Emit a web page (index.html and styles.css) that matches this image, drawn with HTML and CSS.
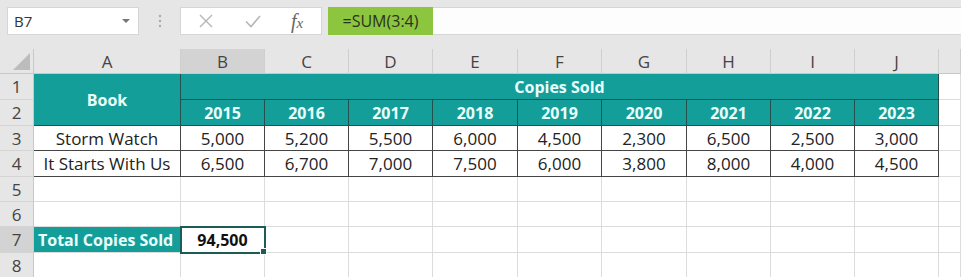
FILE: index.html
```html
<!DOCTYPE html>
<html lang="en">
<head>
    <meta charset="UTF-8" />
    <title>Copies Sold</title>
    <link rel="stylesheet" href="styles.css">
</head>
<body>
    <div class="toolbar">
        <div class="namebox">
            <span>B7</span>
            <svg class="caret" width="8" height="5" viewBox="0 0 8 5"><path d="M0 0h8L4 4z" fill="#777"/></svg>
        </div>
        <div class="grip">
            <svg width="4" height="14" viewBox="0 0 4 14"><circle cx="2" cy="2" r="1.2" fill="#aaa"/><circle cx="2" cy="7" r="1.2" fill="#aaa"/><circle cx="2" cy="12" r="1.2" fill="#aaa"/></svg>
        </div>
        <div class="fx-buttons">
            <svg class="btn-cancel" width="14" height="14" viewBox="0 0 14 14"><path d="M1 1l12 12M13 1L1 13" stroke="#b5b5b5" stroke-width="1.4" fill="none"/></svg>
            <svg class="btn-enter" width="16" height="14" viewBox="0 0 16 14"><path d="M1 7.5l5 5L15 2" stroke="#b5b5b5" stroke-width="1.6" fill="none"/></svg>
            <span class="fx">f<i>x</i></span>
        </div>
        <div class="formula">
            <span class="formula-text">=SUM(3:4)</span>
        </div>
    </div>

    <div class="sheet">
        <!-- column headers -->
        <div class="corner"><span class="tri"></span></div>
        <div class="colhead">A</div>
        <div class="colhead active">B</div>
        <div class="colhead">C</div>
        <div class="colhead">D</div>
        <div class="colhead">E</div>
        <div class="colhead">F</div>
        <div class="colhead">G</div>
        <div class="colhead">H</div>
        <div class="colhead">I</div>
        <div class="colhead">J</div>
        <div class="colhead"></div>

        <!-- row 1 -->
        <div class="rowhead">1</div>
        <div class="cell teal book">Book</div>
        <div class="cell teal span-title">Copies Sold</div>
        <div class="cell"></div>

        <!-- row 2 -->
        <div class="rowhead">2</div>
        <div class="cell teal">2015</div>
        <div class="cell teal">2016</div>
        <div class="cell teal">2017</div>
        <div class="cell teal">2018</div>
        <div class="cell teal">2019</div>
        <div class="cell teal">2020</div>
        <div class="cell teal">2021</div>
        <div class="cell teal">2022</div>
        <div class="cell teal">2023</div>
        <div class="cell"></div>

        <!-- row 3 -->
        <div class="rowhead">3</div>
        <div class="cell data">Storm Watch</div>
        <div class="cell data">5,000</div>
        <div class="cell data">5,200</div>
        <div class="cell data">5,500</div>
        <div class="cell data">6,000</div>
        <div class="cell data">4,500</div>
        <div class="cell data">2,300</div>
        <div class="cell data">6,500</div>
        <div class="cell data">2,500</div>
        <div class="cell data">3,000</div>
        <div class="cell"></div>

        <!-- row 4 -->
        <div class="rowhead">4</div>
        <div class="cell data">It Starts With Us</div>
        <div class="cell data">6,500</div>
        <div class="cell data">6,700</div>
        <div class="cell data">7,000</div>
        <div class="cell data">7,500</div>
        <div class="cell data">6,000</div>
        <div class="cell data">3,800</div>
        <div class="cell data">8,000</div>
        <div class="cell data">4,000</div>
        <div class="cell data">4,500</div>
        <div class="cell"></div>

        <!-- rows 5-6 -->
        <div class="rowhead">5</div>
        <div class="cell"></div><div class="cell"></div><div class="cell"></div><div class="cell"></div>
        <div class="cell"></div><div class="cell"></div><div class="cell"></div><div class="cell"></div>
        <div class="cell"></div><div class="cell"></div><div class="cell"></div>

        <div class="rowhead">6</div>
        <div class="cell"></div><div class="cell"></div><div class="cell"></div><div class="cell"></div>
        <div class="cell"></div><div class="cell"></div><div class="cell"></div><div class="cell"></div>
        <div class="cell"></div><div class="cell"></div><div class="cell"></div>

        <!-- row 7: total -->
        <div class="rowhead active">7</div>
        <div class="cell teal total-label">Total Copies Sold</div>
        <div class="cell selected">94,500</div>
        <div class="cell"></div><div class="cell"></div><div class="cell"></div><div class="cell"></div>
        <div class="cell"></div><div class="cell"></div><div class="cell"></div><div class="cell"></div>
        <div class="cell"></div>

        <div class="rowhead">8</div>
        <div class="cell"></div><div class="cell"></div><div class="cell"></div><div class="cell"></div>
        <div class="cell"></div><div class="cell"></div><div class="cell"></div><div class="cell"></div>
        <div class="cell"></div><div class="cell"></div><div class="cell"></div>
    </div>
</body>
</html>
```

FILE: styles.css
```css
body {
    margin: 0;
    font-family: 'Open Sans', sans-serif;
    background-color: #e6e6e6;
    overflow: hidden;
}
.toolbar {
    display: flex;
    align-items: center;
    height: 49px;
    padding: 0 0 0 7px;
    box-sizing: border-box;
    background-color: #e6e6e6;
}
.namebox {
    width: 132px;
    height: 28px;
    box-sizing: border-box;
    background-color: #fff;
    border: 1px solid #d6d6d6;
    display: flex;
    align-items: center;
    justify-content: space-between;
    padding: 0 8px 0 6px;
    font-size: 15px;
    color: #333;
    margin-top: -7px;
}
.grip {
    width: 41px;
    display: flex;
    justify-content: center;
    margin-top: -7px;
}
.fx-buttons {
    width: 142px;
    height: 28px;
    box-sizing: border-box;
    background-color: #fff;
    border: 1px solid #d6d6d6;
    display: flex;
    align-items: center;
    padding-left: 18px;
    margin-top: -7px;
}
.btn-enter {
    margin-left: 32px;
}
.fx {
    margin-left: 30px;
    font-family: 'Liberation Serif', serif;
    font-style: italic;
    font-size: 20px;
    color: #666;
    line-height: 1;
}
.fx i {
    font-size: 15px;
}
.formula {
    flex: 1;
    height: 28px;
    box-sizing: border-box;
    margin-left: 6px;
    background-color: #fdfdfd;
    border-top: 1px solid #d6d6d6;
    border-bottom: 1px solid #d6d6d6;
    margin-top: -7px;
    display: flex;
}
.formula-text {
    width: 105px;
    background-color: #8cc63f;
    color: #2a331e;
    font-size: 16px;
    display: flex;
    align-items: center;
    justify-content: center;
    margin: -1px 0;
}

.sheet {
    display: grid;
    grid-template-columns: 34px 147px 84px 84px 84px 85px 84px 85px 84px 84px 84px 1fr;
    grid-template-rows: 25px 26px 26px 25px 26px 25px 25px 26px 26px;
    background-color: #fff;
    font-size: 17px;
    color: #222;
}
.corner,
.colhead,
.rowhead {
    background-color: #e6e6e6;
    color: #444;
    display: flex;
    align-items: center;
    justify-content: center;
    box-sizing: border-box;
}
.corner {
    position: relative;
    border-right: 1px solid #c8c8c8;
    border-bottom: 1px solid #c8c8c8;
}
.tri {
    position: absolute;
    right: 3px;
    bottom: 3px;
    width: 0;
    height: 0;
    border-left: 17px solid transparent;
    border-bottom: 17px solid #bcbcbc;
}
.colhead {
    border-right: 1px solid #cfcfcf;
    border-bottom: 1px solid #c8c8c8;
}
.colhead.active,
.rowhead.active {
    background-color: #d3d3d3;
}
.rowhead {
    border-right: 1px solid #c8c8c8;
    border-bottom: 1px solid #d4d4d4;
}
.cell {
    box-sizing: border-box;
    border-right: 1px solid #dcdcdc;
    border-bottom: 1px solid #dcdcdc;
    display: flex;
    align-items: center;
    justify-content: center;
    white-space: nowrap;
}
.teal {
    background-color: #139e9a;
    color: #eafffc;
    font-weight: 700;
    font-size: 16px;
    border-color: #24514e;
}
.book {
    grid-row: span 2;
}
.span-title {
    grid-column: span 9;
}
.data {
    border-color: #444;
}
.total-label {
    justify-content: flex-start;
    padding-left: 4px;
    border-color: #dcdcdc;
}
.selected {
    position: relative;
    font-weight: 700;
    font-size: 16px;
    color: #111;
    outline: 2px solid #1d5c56;
    outline-offset: -1px;
}
.selected::after {
    content: '';
    position: absolute;
    right: -3px;
    bottom: -3px;
    width: 5px;
    height: 5px;
    background-color: #1d5c56;
    border: 1px solid #fff;
}
```
